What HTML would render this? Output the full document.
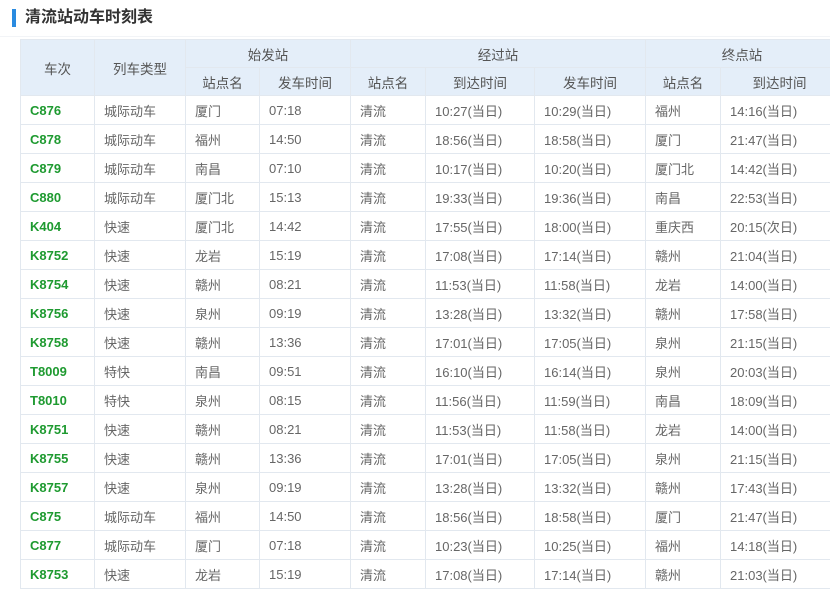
<!DOCTYPE html>
<html><head><meta charset="utf-8"><style>
html,body{margin:0;padding:0;width:830px;height:605px;overflow:hidden;background:#fff;font-family:"Liberation Sans","Noto Sans CJK SC",sans-serif;}
.title{position:absolute;left:12px;top:9px;height:18px;border-left:4px solid #2a8be0;padding-left:9px;font-size:16px;font-weight:bold;color:#333;line-height:18px;}
.line{position:absolute;left:0;top:36px;width:830px;height:1px;background:#f2f4f7;}
table{position:absolute;left:20px;top:39px;border-collapse:collapse;table-layout:fixed;width:818px;font-size:13px;color:#666;}
td,th{border:1px solid #e2e8ef;height:28px;padding:0;font-weight:normal;white-space:nowrap;overflow:hidden;}
th{background:#e4eef9;color:#555;text-align:center;font-size:13.5px;height:27px;}
td{padding-left:9px;}
td.c{color:#1e9a30;font-weight:bold;padding-left:9px;}
</style></head><body>
<div class="title">清流站动车时刻表</div>
<div class="line"></div>
<table>
<colgroup><col style="width:74px"><col style="width:91px"><col style="width:74px"><col style="width:91px"><col style="width:75px"><col style="width:109px"><col style="width:111px"><col style="width:75px"><col style="width:118px"></colgroup>
<thead>
<tr><th rowspan="2">车次</th><th rowspan="2">列车类型</th><th colspan="2">始发站</th><th colspan="3">经过站</th><th colspan="2">终点站</th></tr>
<tr><th>站点名</th><th>发车时间</th><th>站点名</th><th>到达时间</th><th>发车时间</th><th>站点名</th><th>到达时间</th></tr>
</thead>
<tbody>
<tr><td class="c">C876</td><td>城际动车</td><td>厦门</td><td>07:18</td><td>清流</td><td>10:27(当日)</td><td>10:29(当日)</td><td>福州</td><td>14:16(当日)</td></tr>
<tr><td class="c">C878</td><td>城际动车</td><td>福州</td><td>14:50</td><td>清流</td><td>18:56(当日)</td><td>18:58(当日)</td><td>厦门</td><td>21:47(当日)</td></tr>
<tr><td class="c">C879</td><td>城际动车</td><td>南昌</td><td>07:10</td><td>清流</td><td>10:17(当日)</td><td>10:20(当日)</td><td>厦门北</td><td>14:42(当日)</td></tr>
<tr><td class="c">C880</td><td>城际动车</td><td>厦门北</td><td>15:13</td><td>清流</td><td>19:33(当日)</td><td>19:36(当日)</td><td>南昌</td><td>22:53(当日)</td></tr>
<tr><td class="c">K404</td><td>快速</td><td>厦门北</td><td>14:42</td><td>清流</td><td>17:55(当日)</td><td>18:00(当日)</td><td>重庆西</td><td>20:15(次日)</td></tr>
<tr><td class="c">K8752</td><td>快速</td><td>龙岩</td><td>15:19</td><td>清流</td><td>17:08(当日)</td><td>17:14(当日)</td><td>赣州</td><td>21:04(当日)</td></tr>
<tr><td class="c">K8754</td><td>快速</td><td>赣州</td><td>08:21</td><td>清流</td><td>11:53(当日)</td><td>11:58(当日)</td><td>龙岩</td><td>14:00(当日)</td></tr>
<tr><td class="c">K8756</td><td>快速</td><td>泉州</td><td>09:19</td><td>清流</td><td>13:28(当日)</td><td>13:32(当日)</td><td>赣州</td><td>17:58(当日)</td></tr>
<tr><td class="c">K8758</td><td>快速</td><td>赣州</td><td>13:36</td><td>清流</td><td>17:01(当日)</td><td>17:05(当日)</td><td>泉州</td><td>21:15(当日)</td></tr>
<tr><td class="c">T8009</td><td>特快</td><td>南昌</td><td>09:51</td><td>清流</td><td>16:10(当日)</td><td>16:14(当日)</td><td>泉州</td><td>20:03(当日)</td></tr>
<tr><td class="c">T8010</td><td>特快</td><td>泉州</td><td>08:15</td><td>清流</td><td>11:56(当日)</td><td>11:59(当日)</td><td>南昌</td><td>18:09(当日)</td></tr>
<tr><td class="c">K8751</td><td>快速</td><td>赣州</td><td>08:21</td><td>清流</td><td>11:53(当日)</td><td>11:58(当日)</td><td>龙岩</td><td>14:00(当日)</td></tr>
<tr><td class="c">K8755</td><td>快速</td><td>赣州</td><td>13:36</td><td>清流</td><td>17:01(当日)</td><td>17:05(当日)</td><td>泉州</td><td>21:15(当日)</td></tr>
<tr><td class="c">K8757</td><td>快速</td><td>泉州</td><td>09:19</td><td>清流</td><td>13:28(当日)</td><td>13:32(当日)</td><td>赣州</td><td>17:43(当日)</td></tr>
<tr><td class="c">C875</td><td>城际动车</td><td>福州</td><td>14:50</td><td>清流</td><td>18:56(当日)</td><td>18:58(当日)</td><td>厦门</td><td>21:47(当日)</td></tr>
<tr><td class="c">C877</td><td>城际动车</td><td>厦门</td><td>07:18</td><td>清流</td><td>10:23(当日)</td><td>10:25(当日)</td><td>福州</td><td>14:18(当日)</td></tr>
<tr><td class="c">K8753</td><td>快速</td><td>龙岩</td><td>15:19</td><td>清流</td><td>17:08(当日)</td><td>17:14(当日)</td><td>赣州</td><td>21:03(当日)</td></tr>
</tbody>
</table>
</body></html>
